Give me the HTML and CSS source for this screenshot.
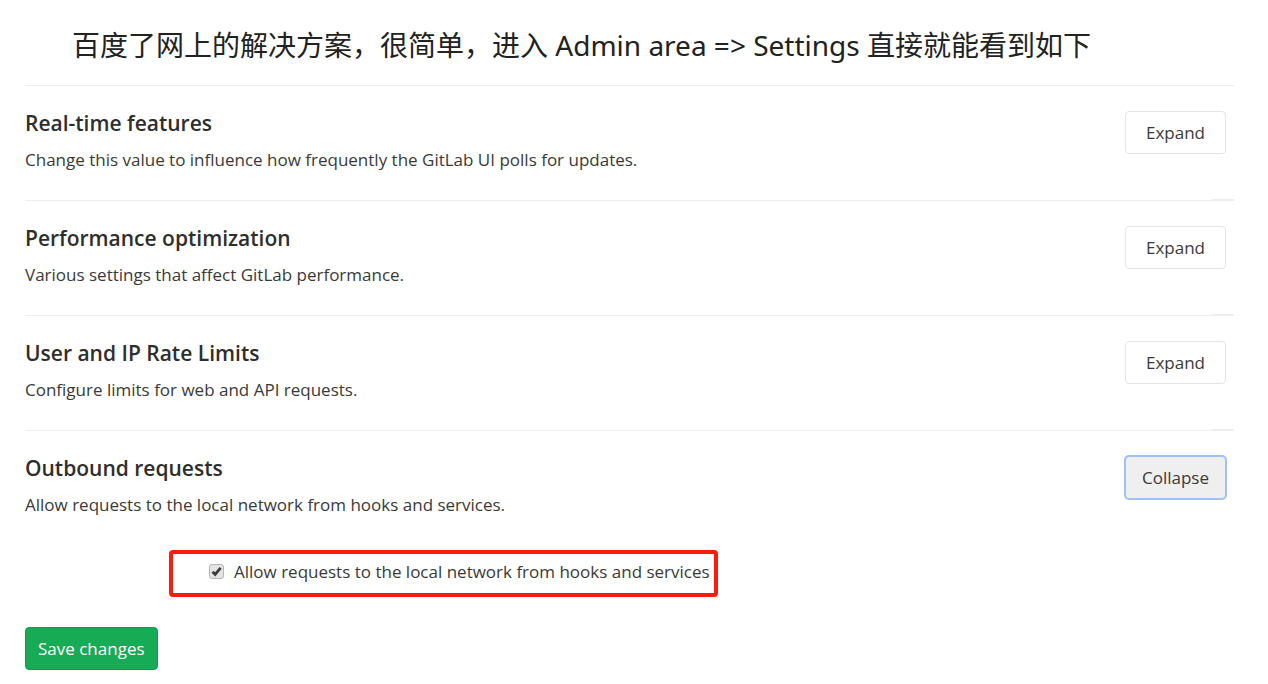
FILE: index.html
```html
<!DOCTYPE html>
<html lang="zh-CN">
<head>
<meta charset="utf-8">
<title>Admin area settings</title>
<link rel="stylesheet" href="styles.css">
</head>
<body>
<p class="intro">百度了网上的解决方案，很简单，进入 Admin area =&gt; Settings 直接就能看到如下</p>
<main class="settings">
  <section class="section">
    <div><h2 class="title">Real-time features</h2><p class="desc">Change this value to influence how frequently the GitLab UI polls for updates.</p></div>
    <button class="btn" type="button">Expand</button>
  </section>
  <section class="section">
    <div><h2 class="title">Performance optimization</h2><p class="desc">Various settings that affect GitLab performance.</p></div>
    <button class="btn" type="button">Expand</button>
  </section>
  <section class="section">
    <div><h2 class="title">User and IP Rate Limits</h2><p class="desc">Configure limits for web and API requests.</p></div>
    <button class="btn" type="button">Expand</button>
  </section>
  <section class="section section-open">
    <div><h2 class="title">Outbound requests</h2><p class="desc">Allow requests to the local network from hooks and services.</p></div>
    <button class="btn btn-active" type="button">Collapse</button>
  </section>
  <form class="form">
    <label class="option" for="allow-local">
      <span class="check-wrap">
        <input class="check" id="allow-local" type="checkbox" checked>
        <svg class="tick" viewBox="0 0 15 15" aria-hidden="true"><path d="M3.5 7.8 6.2 10.5 11.6 3.8" fill="none" stroke="#3c3c3c" stroke-width="2.8"/></svg>
      </span>
      <span>Allow requests to the local network from hooks and services</span>
    </label>
    <button class="save" type="button">Save changes</button>
  </form>
</main>
</body>
</html>
```
FILE: styles.css
```css
* { box-sizing: border-box; }
body {
  margin: 0;
  background: #fff;
  color: #3a3a3a;
  font-family: "Open Sans", "Noto Sans", sans-serif;
  font-size: 17px;
}
.intro {
  margin: 0;
  padding: 25px 72px 20px;
  font-family: "Noto Sans", "Noto Sans CJK SC", sans-serif;
  font-size: 28px;
  line-height: 40px;
  color: #222;
}
.settings { margin: 0 34px 0 25px; }
.section {
  position: relative;
  display: flex;
  justify-content: space-between;
  align-items: flex-start;
  min-height: 115px;
  padding: 25px 8px 0 0;
  border-top: 1px solid #eee;
}
.section + .section::before {
  content: "";
  position: absolute;
  top: -2px;
  right: 0;
  width: 22px;
  height: 1px;
  background: #eee;
}
.title {
  margin: 0;
  color: #2e2e2e;
  font-size: 21px;
  line-height: 24px;
  font-weight: 600;
}
.desc { margin: 13px 0 0; line-height: 24px; }
.btn {
  width: 101px;
  height: 43px;
  background: #fff;
  border: 1px solid #e5e5e5;
  border-radius: 4px;
  color: inherit;
  font: inherit;
}
.btn-active {
  background: #efefef;
  border-color: #9ec1fa;
  box-shadow: 0 0 0 1px #9ec1fa;
}
.section-open { min-height: 0; }
.form {
  display: flex;
  flex-direction: column;
  align-items: flex-start;
  margin-top: 33px;
}
.option {
  display: flex;
  align-items: center;
  gap: 10px;
  height: 47px;
  margin-left: 144px;
  padding: 0 4px 5px 36px;
  border: 4px solid #ff1a0d;
  border-radius: 4px;
}
.check-wrap { display: grid; width: 15px; height: 15px; }
.check, .tick { grid-area: 1 / 1; width: 15px; height: 15px; }
.check {
  appearance: none;
  margin: 0;
  background: #e4e4e4;
  border: 1px solid #b4b4b4;
  border-radius: 3px;
}
.tick { pointer-events: none; visibility: hidden; }
.check:checked + .tick { visibility: visible; }
.save {
  height: 43px;
  margin-top: 30px;
  padding: 0 12px;
  background: #18ab55;
  border: 1px solid #159a4b;
  border-radius: 4px;
  color: #fff;
  font: inherit;
}
```
